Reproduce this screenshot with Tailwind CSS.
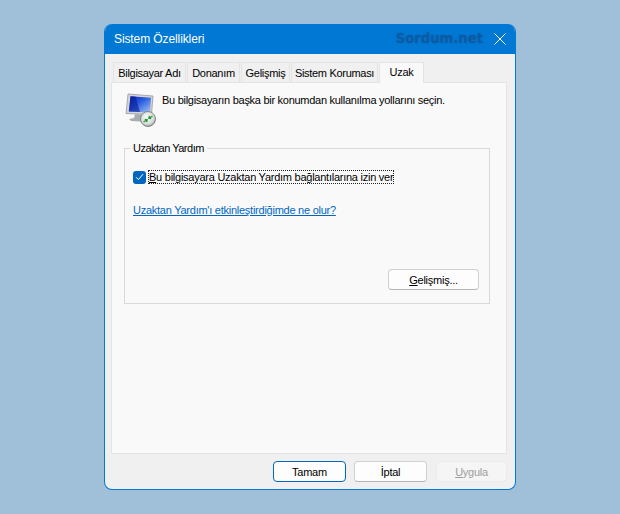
<!DOCTYPE html>
<html lang="tr">
<head>
<meta charset="utf-8">
<script src="https://cdn.jsdelivr.net/npm/@tailwindcss/browser@4"></script>
</head>
<body class="w-[620px] h-[514px] overflow-hidden bg-[#a0bfd9] font-['Liberation_Sans',sans-serif] text-[11px] tracking-[-0.25px] leading-[16px] text-black whitespace-nowrap">
<div class="pt-[24px] pl-[104px]">
  <div class="w-[412px] h-[466px] flex flex-col rounded-[8px] border border-[#0078d4] border-t-0 bg-[#f0f0f0] overflow-hidden">
    <div class="h-[30px] shrink-0 bg-[#0078d4] flex items-center pl-[9px] pr-[8px] text-white">
      <span class="text-[12px] tracking-[-0.1px]">Sistem Özellikleri</span>
      <span class="ml-auto mr-[11px] font-['DejaVu_Sans',sans-serif] font-bold text-[13.2px] tracking-normal text-[#0b5ba3] [text-shadow:0_0_2px_#0a65b5]">Sordum.net</span>
      <svg width="12" height="12" viewBox="0 0 12 12" class="mr-[1px]" stroke="#ffffff" stroke-width="1" fill="none"><path d="M.5.5l11 11M11.5.5l-11 11"/></svg>
    </div>
    <div class="flex-1 flex flex-col pl-[6px] pt-[7px]">
      <div class="flex h-[21px] items-end pl-[2px] gap-[1px] tracking-[-0.3px]">
        <div class="w-[73px] h-[20px] bg-[#f0f0f0] border border-b-0 border-[#e4e4e4] flex items-center justify-center">Bilgisayar Adı</div>
        <div class="w-[53px] h-[20px] bg-[#f0f0f0] border border-b-0 border-[#e4e4e4] flex items-center justify-center">Donanım</div>
        <div class="w-[49px] h-[20px] bg-[#f0f0f0] border border-b-0 border-[#e4e4e4] flex items-center justify-center">Gelişmiş</div>
        <div class="w-[87px] h-[20px] bg-[#f0f0f0] border border-b-0 border-[#e4e4e4] flex items-center justify-center">Sistem Koruması</div>
        <div class="w-[45px] h-[21px] -mb-[1px] relative z-10 bg-[#f9f9f9] border border-b-0 border-[#e4e4e4] flex items-center justify-center pb-[3px]">Uzak</div>
      </div>
      <div class="w-[396px] h-[372px] bg-[#f9f9f9] border border-[#e4e4e4] pl-[13px] pr-[16px] pt-[10px]">
        <div class="flex h-[34px] gap-[5px]">
          <svg width="32" height="34" viewBox="0 0 32 34" class="shrink-0">
            <defs>
              <linearGradient id="scr" x1="0" y1="0" x2="1" y2="1">
                <stop offset="0" stop-color="#0a1fa8"/><stop offset=".45" stop-color="#2b5fe0"/><stop offset="1" stop-color="#a9c6f5"/>
              </linearGradient>
              <radialGradient id="dot" cx=".45" cy=".4" r=".65">
                <stop offset="0" stop-color="#ffffff"/><stop offset=".7" stop-color="#d4d8d4"/><stop offset="1" stop-color="#7d8580"/>
              </radialGradient>
            </defs>
            <path d="M3 1 L28 3 L26.5 21.5 L1 20.5 Z" fill="#d2d4d8" stroke="#8b8f96" stroke-width=".7"/>
            <path d="M5.5 3.2 L26 4.8 L25 19.5 L3.8 18.5 Z" fill="url(#scr)"/>
            <path d="M10.5 3.6 L15 19 L3.8 18.5 L5.5 3.2 Z" fill="#0a1590" opacity=".55"/>
            <path d="M10 21 L18 21.5 L19 25 L23 27 L23 29 L6 28 L4 26 L9 25 Z" fill="#a9acb0"/>
            <circle cx="23" cy="26" r="7.5" fill="url(#dot)" stroke="#6f7772" stroke-width=".8"/>
            <path d="M18.5 29 L22 26.8 M19.8 26.3 L22.2 26.8 L21.6 29.2" stroke="#1f9a3a" stroke-width="1.3" fill="none"/>
            <path d="M27.5 23 L24 25.2 M26.2 25.7 L23.8 25.2 L24.4 22.8" stroke="#1f9a3a" stroke-width="1.3" fill="none"/>
          </svg>
          <p class="leading-[14px] tracking-[-0.28px]">Bu bilgisayarın başka bir konumdan kullanılma yollarını seçin.</p>
        </div>
        <div class="relative mt-[21px] -ml-[1px] w-[366px] h-[156px] border border-[#d9d9d9] pl-[8px] pt-[21px]">
          <span class="absolute -top-[9px] left-[5px] bg-[#f9f9f9] px-[3px] tracking-[-0.5px]">Uzaktan Yardım</span>
          <label class="flex items-center h-[14px]">
            <span class="w-[13px] h-[13px] shrink-0 rounded-[3px] bg-[#0067c0] flex items-center justify-center">
              <svg width="9" height="8" viewBox="0 0 9 8" fill="none" stroke="#ffffff" stroke-width="1"><path d="M1 4.2 L3.4 6.6 L8 1.2"/></svg>
            </span>
            <span class="ml-[2px] h-[14px] w-[246px] border border-dotted border-[#222] leading-[12px] flex items-center"><span><span class="underline">B</span>u bilgisayara Uzaktan Yardım bağlantılarına izin ver</span></span>
          </label>
          <a class="block mt-[18px] text-[#0067c0] underline leading-[16px]">Uzaktan Yardım'ı etkinleştirdiğimde ne olur?</a>
          <div class="flex justify-end mt-[51px] pr-[10px]">
            <button class="w-[91px] h-[21px] rounded-[4px] bg-[#fdfdfd] border border-[#d0d0d0] border-b-[#b5b5b5] flex items-center justify-center"><span><span class="underline">G</span>elişmiş...</span></button>
          </div>
        </div>
      </div>
      <div class="flex gap-[8px] mt-[7px] pl-[162px]">
        <button class="w-[73px] h-[21px] rounded-[4px] bg-[#fdfdfd] border border-[#0067c0] flex items-center justify-center">Tamam</button>
        <button class="w-[73px] h-[21px] rounded-[4px] bg-[#fdfdfd] border border-[#d0d0d0] border-b-[#b5b5b5] flex items-center justify-center mr-[1px]">İptal</button>
        <button class="w-[71px] h-[21px] rounded-[4px] bg-[#f5f5f5] border border-[#ebebeb] text-[#9d9d9d] flex items-center justify-center"><span><span class="underline">U</span>ygula</span></button>
      </div>
    </div>
  </div>
</div>
</body>
</html>
